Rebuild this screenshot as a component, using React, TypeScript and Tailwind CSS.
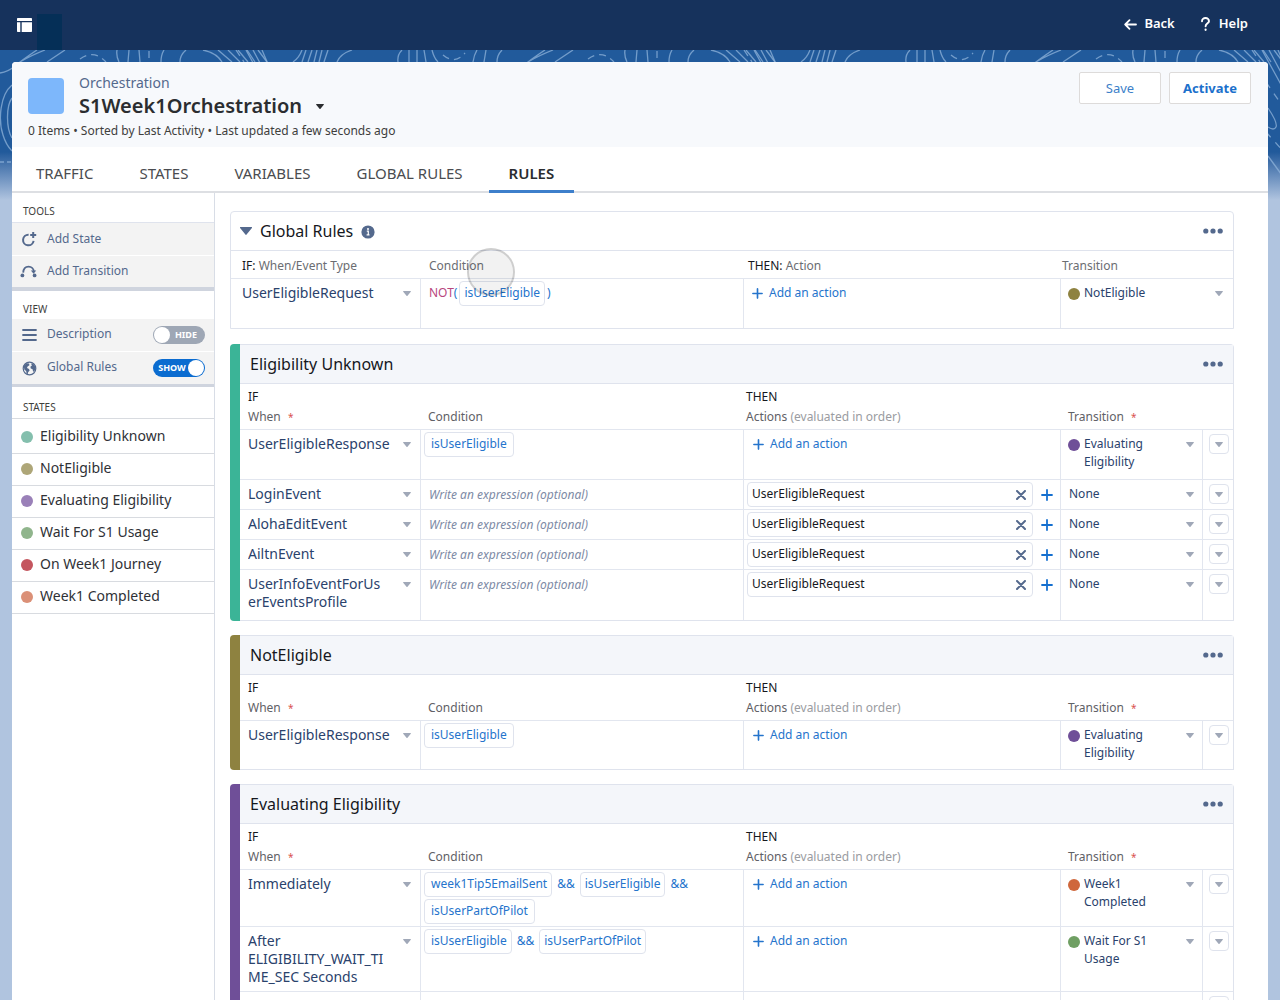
import React from 'react'

type Dot = 'olive' | 'purple' | 'orange' | 'green'

const dotColors: Record<Dot, string> = {
  olive: 'bg-[#8e8240]',
  purple: 'bg-[#6f4f98]',
  orange: 'bg-[#cf673c]',
  green: 'bg-[#6f9f63]',
}

interface Rule {
  when: string
  condition?: string[][]
  action?: string
  transition?: string
  dot?: Dot
  height: string
}

interface RuleGroup {
  title: string
  bar: string
  rules: Rule[]
  draft?: boolean
}

const tabs = ['TRAFFIC', 'STATES', 'VARIABLES', 'GLOBAL RULES', 'RULES']

const states = [
  { name: 'Eligibility Unknown', color: 'bg-[#84bfad]' },
  { name: 'NotEligible', color: 'bg-[#aea678]' },
  { name: 'Evaluating Eligibility', color: 'bg-[#9a80b8]' },
  { name: 'Wait For S1 Usage', color: 'bg-[#90b58c]' },
  { name: 'On Week1 Journey', color: 'bg-[#c4565f]' },
  { name: 'Week1 Completed', color: 'bg-[#db9077]' },
]

const groups: RuleGroup[] = [
  {
    title: 'Eligibility Unknown',
    bar: 'bg-[#3bb497]',
    rules: [
      { when: 'UserEligibleResponse', condition: [['isUserEligible']], transition: 'Evaluating Eligibility', dot: 'purple', height: 'h-[50px]' },
      { when: 'LoginEvent', action: 'UserEligibleRequest', height: 'h-[30px]' },
      { when: 'AlohaEditEvent', action: 'UserEligibleRequest', height: 'h-[30px]' },
      { when: 'AiltnEvent', action: 'UserEligibleRequest', height: 'h-[30px]' },
      { when: 'UserInfoEventForUserEventsProfile', action: 'UserEligibleRequest', height: 'h-[51px]' },
    ],
  },
  {
    title: 'NotEligible',
    bar: 'bg-[#8e8240]',
    rules: [
      { when: 'UserEligibleResponse', condition: [['isUserEligible']], transition: 'Evaluating Eligibility', dot: 'purple', height: 'h-[49px]' },
    ],
  },
  {
    title: 'Evaluating Eligibility',
    bar: 'bg-[#6f4f98]',
    draft: true,
    rules: [
      {
        when: 'Immediately',
        condition: [['week1Tip5EmailSent', 'isUserEligible', ''], ['isUserPartOfPilot']],
        transition: 'Week1 Completed',
        dot: 'orange',
        height: 'h-[57px]',
      },
      {
        when: 'After ELIGIBILITY_WAIT_TIME_SEC Seconds',
        condition: [['isUserEligible', 'isUserPartOfPilot']],
        transition: 'Wait For S1 Usage',
        dot: 'green',
        height: 'h-[65px]',
      },
    ],
  },
]

const Caret = ({ className = '' }: { className?: string }) => (
  <svg viewBox="0 0 8 5" className={`w-2 h-[5px] shrink-0 ${className}`} fill="currentColor" aria-hidden="true">
    <path d="M0.6 0h6.8c.5 0 .7.5.4.8L4.5 4.7c-.3.3-.7.3-1 0L.2.8C-.1.5.1 0 .6 0z" />
  </svg>
)

const Plus = ({ className = '' }: { className?: string }) => (
  <svg viewBox="0 0 12 12" className={`shrink-0 ${className}`} stroke="currentColor" strokeWidth="1.8" strokeLinecap="round" aria-hidden="true">
    <path d="M6 1v10M1 6h10" />
  </svg>
)

const MoreButton = ({ label }: { label: string }) => (
  <button className="text-[#54698d] p-0.5" aria-label={label}>
    <svg viewBox="0 0 20 6" className="w-5 h-1.5" fill="currentColor">
      <circle cx="2.8" cy="3" r="2.6" />
      <circle cx="10" cy="3" r="2.6" />
      <circle cx="17.2" cy="3" r="2.6" />
    </svg>
  </button>
)

// One line values use the native select, long ones need a button so that the text can wrap
const Picker = ({ value, label, dot, size }: { value: string; label: string; dot?: Dot; size: string }) => {
  const wraps = value.length > 20 || value.startsWith('Week1') || value.startsWith('Wait')
  return (
    <div className={`flex items-start text-[#2a426c] leading-[18px] ${size}`}>
      {dot && <span className={`w-3 h-3 mt-1 mr-1 rounded-full shrink-0 ${dotColors[dot]}`} />}
      {wraps ? (
        <button aria-haspopup="listbox" aria-label={`${label}: ${value}`} className="flex flex-1 min-w-0 items-start text-left">
          <span className={`flex-1 min-w-0 wrap-anywhere ${dot ? 'pr-7' : 'pr-4'}`}>{value}</span>
          <Caret className="mt-[7px] text-[#a0a8b8]" />
        </button>
      ) : (
        <div className="flex flex-1 min-w-0 items-start">
          <select aria-label={label} defaultValue={value} className="flex-1 min-w-0 h-[18px] appearance-none bg-transparent">
            <option>{value}</option>
          </select>
          <Caret className="mt-[7px] text-[#a0a8b8] pointer-events-none" />
        </div>
      )}
    </div>
  )
}

const Chip = ({ children, padding = 'px-1' }: { children: React.ReactNode; padding?: string }) => (
  <button className={`h-[25px] border border-[#dfe3ed] rounded bg-white leading-[18px] pb-0.5 ${padding}`}>
    {children}
  </button>
)

const Condition = ({ lines }: { lines: string[][] }) => (
  <div className="flex flex-col gap-0.5 pt-0.5 pl-[3px] text-xs text-[#2574cc]">
    {lines.map((line, i) => (
      <div key={i} className="flex items-center gap-[5px]">
        {line.map((name, j) => (
          <React.Fragment key={j}>
            {j > 0 && <span className="pb-0.5">&amp;&amp;</span>}
            {name && <Chip padding={j > 0 ? 'px-1' : line.length > 1 ? 'pl-1.5 pr-1' : 'px-1.5'}>{name}</Chip>}
          </React.Fragment>
        ))}
      </div>
    ))}
  </div>
)

const AddAction = () => (
  <button className="flex items-center gap-1.5 text-xs leading-[18px] text-[#2574cc]">
    <Plus className="w-[11px] h-[11px]" />
    Add an action
  </button>
)

const RuleMenu = () => (
  <button aria-label="Rule menu" className="flex items-center justify-center w-5 h-5 border border-[#dfe3ed] rounded text-[#a0a8b8]">
    <Caret />
  </button>
)

const cell = 'border-t border-[#e2e6ef] align-top p-0'
const split = 'border-l'

const RuleRow = ({ rule }: { rule: Rule }) => (
  <tr className={rule.height}>
    <td className={`${cell} pt-[5px] pb-[5px] pl-2 pr-[9px]`}>
      <Picker value={rule.when} label="When" size="text-sm leading-[18px]" />
    </td>
    <td className={`${cell} ${split}`}>
      {rule.condition ? (
        <Condition lines={rule.condition} />
      ) : (
        <input
          aria-label="Condition"
          placeholder="Write an expression (optional)"
          className="block w-full h-[18px] mt-[5px] pl-2 text-xs italic outline-none placeholder:text-[#7d8aa5]"
        />
      )}
    </td>
    <td className={`${cell} ${split}`}>
      {rule.action ? (
        <div className="flex items-center pt-0.5 pl-[3px] pr-[7px]">
          <div className="flex flex-1 min-w-0 items-center h-[25px] border border-[#dfe3ed] rounded pl-1 pr-1.5">
            <input aria-label="Action" defaultValue={rule.action} className="flex-1 min-w-0 text-xs text-[#16181d] outline-none pb-0.5" />
            <button aria-label="Remove action" className="text-[#54698d]">
              <svg viewBox="0 0 10 10" className="w-2.5 h-2.5" stroke="currentColor" strokeWidth="2" strokeLinecap="round">
                <path d="M1 1l8 8M9 1l-8 8" />
              </svg>
            </button>
          </div>
          <button aria-label="Add action" className="ml-2 text-[#1570d0]">
            <Plus className="w-3 h-3" />
          </button>
        </div>
      ) : (
        <div className="pt-[5px] pl-[9px]">
          <AddAction />
        </div>
      )}
    </td>
    <td className={`${cell} ${split} pt-[5px] pr-2 ${rule.dot ? 'pl-[7px]' : 'pl-2'}`}>
      <Picker value={rule.transition ?? 'None'} label="Transition" dot={rule.dot} size="text-xs leading-[18px]" />
    </td>
    <td className={`${cell} ${split} pt-1 pl-1.5`}>
      <RuleMenu />
    </td>
  </tr>
)

const DraftRow = () => (
  <tr className="h-[50px]">
    <td className={cell} />
    <td className={`${cell} ${split}`} />
    <td className={`${cell} ${split}`} />
    <td className={`${cell} ${split}`} />
    <td className={`${cell} ${split} pt-1 pl-1.5`}>
      <RuleMenu />
    </td>
  </tr>
)

const Required = () => <span className="ml-1 text-[10px] text-[#d9534f]">*</span>

const GroupCard = ({ group }: { group: RuleGroup }) => (
  <section className="flex">
    <div className={`w-2.5 shrink-0 rounded-l ${group.bar}`} />
    <div className="flex-1 min-w-0 border border-l-0 border-[#dfe3ed] rounded-tr">
      <div className="flex items-center justify-between h-[38px] pl-2.5 pr-2 bg-[#f4f6fa]">
        <h2 className="text-base text-[#16181d]">{group.title}</h2>
        <MoreButton label={`${group.title} menu`} />
      </div>
      <table className="w-full table-fixed border-separate border-spacing-0 border-t border-[#dfe3ed]">
        <colgroup>
          <col className="w-[180px]" />
          <col className="w-[323px]" />
          <col />
          <col className="w-[142px]" />
          <col className="w-[31px]" />
        </colgroup>
        <thead>
          <tr className="text-left text-xs leading-5 text-[#5f6166] align-bottom">
            <th className="font-normal pt-[3px] pb-0.5 pl-2 pr-0">
              <div className="text-[#16181d]">IF</div>
              When <Required />
            </th>
            <th className="font-normal pt-[3px] pb-0.5 pl-2 pr-0">Condition</th>
            <th className="font-normal pt-[3px] pb-0.5 pl-[3px] pr-0">
              <div className="text-[#16181d]">THEN</div>
              Actions <span className="text-[#9a9ca1]">(evaluated in order)</span>
            </th>
            <th colSpan={2} className="font-normal pt-[3px] pb-0.5 pl-2 pr-0">
              Transition <Required />
            </th>
          </tr>
        </thead>
        <tbody>
          {group.rules.map((rule) => (
            <RuleRow key={rule.when} rule={rule} />
          ))}
          {group.draft && <DraftRow />}
        </tbody>
      </table>
    </div>
  </section>
)

const GlobalRules = () => (
  <section className="relative mb-px border border-[#dfe3ed] rounded-t">
    <div className="flex items-center h-[38px] pl-[9px] pr-2">
      <button aria-label="Collapse global rules" className="text-[#54698d]">
        <svg viewBox="0 0 12 8" className="w-3 h-2" fill="currentColor">
          <path d="M0.6 0h10.8c.6 0 .8.5.5.9L6.6 7.6c-.3.4-.9.4-1.2 0L.1.9C-.2.5 0 0 .6 0z" />
        </svg>
      </button>
      <h2 className="ml-2 text-base text-[#16181d]">Global Rules</h2>
      <svg viewBox="0 0 14 14" className="w-3.5 h-3.5 ml-2 mt-0.5" aria-hidden="true">
        <circle cx="7" cy="7" r="6.6" fill="#54698d" />
        <circle cx="7" cy="4" r="1" fill="#fff" />
        <path d="M5.8 6.2h1.5v3.4M5.6 9.9h2.9" stroke="#fff" strokeWidth="1.2" fill="none" />
      </svg>
      <div className="flex-1" />
      <MoreButton label="Global rules menu" />
    </div>
    <table className="w-full table-fixed border-separate border-spacing-0 border-t border-[#dfe3ed]">
      <colgroup>
        <col className="w-[189px]" />
        <col className="w-[323px]" />
        <col />
        <col className="w-[173px]" />
      </colgroup>
      <thead>
        <tr className="h-[27px] text-left text-xs leading-[18px] text-[#6b6d72]">
          <th className="font-normal p-0 pt-0.5 pl-[11px]"><span className="text-[#16181d]">IF:</span> When/Event Type</th>
          <th className="font-normal p-0 pt-0.5 pl-[9px]">Condition</th>
          <th className="font-normal p-0 pt-0.5 pl-[5px]"><span className="text-[#16181d]">THEN:</span> Action</th>
          <th className="font-normal p-0 pt-0.5 pl-0.5">Transition</th>
        </tr>
      </thead>
      <tbody>
        <tr className="h-[50px]">
          <td className={`${cell} pt-[5px] pl-[11px] pr-[9px]`}>
            <Picker value="UserEligibleRequest" label="When" size="text-sm leading-[18px]" />
          </td>
          <td className={`${cell} ${split} pt-0.5 pl-2`}>
            <div className="flex items-center text-xs text-[#2574cc]">
              <span className="pb-0.5 text-[#b8467e]">NOT</span>
              <span className="pb-0.5 mr-0.5">(</span>
              <Chip>isUserEligible</Chip>
              <span className="pb-0.5 ml-0.5">)</span>
            </div>
          </td>
          <td className={`${cell} ${split} pt-[5px] pl-2`}>
            <AddAction />
          </td>
          <td className={`${cell} ${split} pt-[5px] pl-[7px] pr-2.5`}>
            <Picker value="NotEligible" label="Transition" dot="olive" size="text-xs leading-[18px]" />
          </td>
        </tr>
      </tbody>
    </table>
    {/* Pointer halo */}
    <div className="absolute left-[236px] top-9 w-12 h-12 rounded-full border-2 border-black/15 bg-black/5 pointer-events-none" />
  </section>
)

const Toggle = ({ id, on }: { id: string; on: boolean }) => (
  <span className={`relative flex items-center w-[52px] h-[18px] rounded-full text-[9px] font-bold text-white ${on ? 'bg-[#0b6cd0]' : 'bg-[#9ea7b5]'}`}>
    <input id={id} type="checkbox" role="switch" defaultChecked={on} className="absolute inset-0 w-full h-full appearance-none rounded-full cursor-pointer" />
    <span className={`flex-1 text-center pointer-events-none ${on ? 'pr-3.5' : 'pl-3.5'}`}>{on ? 'SHOW' : 'HIDE'}</span>
    <span className={`absolute top-px w-4 h-4 rounded-full bg-white pointer-events-none ${on ? 'right-px' : 'left-px'}`} />
  </span>
)

const SideHeading = ({ children }: { children: React.ReactNode }) => (
  <h3 className="pl-[11px] text-[10px] leading-[14px] text-[#3e3e3c]">{children}</h3>
)

const Sidebar = () => (
  <aside className="w-[203px] shrink-0 border-r border-[#d8dde6]">
    <div className="pt-[11px] pb-1">
      <SideHeading>TOOLS</SideHeading>
    </div>
    <div className="border-t border-[#dfe3ed] border-b-4 border-b-[#cfd4de] bg-[#f3f3f3] text-xs text-[#54698d]">
      <button className="flex items-center w-full h-[33px] pl-2 border-b border-white">
        <svg viewBox="0 0 18 16" className="w-[18px] h-4 mr-[9px]" stroke="currentColor" fill="none" strokeWidth="2" aria-hidden="true">
          <path d="M8.600 3.700A5.300 5.300 0 1 0 13.600 9.800" />
          <path d="M13.200 1v6M10.200 4h6" />
        </svg>
        Add State
      </button>
      <button className="flex items-center w-full h-[31px] pl-2 pb-0.5">
        <svg viewBox="0 0 18 14" className="w-[18px] h-3.5 mr-[9px]" aria-hidden="true">
          <path d="M3.2 8.6C3.4 5 5.500 2.600 8.600 2.600s5 2.400 5.200 4.600" stroke="currentColor" strokeWidth="1.800" fill="none" />
          <path d="M10.800 6.600h5.400l-2.600 3.200z" fill="currentColor" />
          <circle cx="2.400" cy="11.400" r="1.900" fill="currentColor" />
          <circle cx="14.600" cy="11.400" r="1.900" fill="currentColor" />
        </svg>
        Add Transition
      </button>
    </div>
    <div className="pt-[11px] pb-[3px]">
      <SideHeading>VIEW</SideHeading>
    </div>
    <div className="border-b-[3px] border-[#cfd4de] bg-[#f3f3f3] text-xs text-[#54698d]">
      <div className="flex items-center h-[33px] pl-2.5 pr-[9px] border-b border-white">
        <svg viewBox="0 0 15 12" className="w-[15px] h-3 mr-2.5" stroke="currentColor" strokeWidth="1.8" strokeLinecap="round" aria-hidden="true">
          <path d="M1 1h13M1 6h13M1 11h13" />
        </svg>
        <label htmlFor="show-description" className="flex-1 pb-0.5">Description</label>
        <Toggle id="show-description" on={false} />
      </div>
      <div className="flex items-center h-8 pl-2.5 pr-[9px]">
        <svg viewBox="0 0 15 15" className="w-[15px] h-[15px] mr-2.5" aria-hidden="true">
          <circle cx="7.500" cy="7.500" r="6.300" stroke="currentColor" strokeWidth="1.200" fill="none" />
          <path d="M1.800 4.800L4.500 2.200l2.600.4.300 1.700-1.800 1.200-.6 1.600 2 .8.600 1.500-1.500 1.800-.3 2-1.200-.6-.5-2.600-1.800-1.600zM9 2.600l2.400.3 1.800 2.600.4 2.200-1.200 2.600-1.300.4-.5-2.400-1.800-.8-.4-1.800 1.500-1.200z" fill="currentColor" />
        </svg>
        <label htmlFor="show-global" className="flex-1 pb-0.5">Global Rules</label>
        <Toggle id="show-global" on />
      </div>
    </div>
    <div className="pt-[13px] pb-1">
      <SideHeading>STATES</SideHeading>
    </div>
    <ul className="border-t border-[#d8dbe0]">
      {states.map((state) => (
        <li key={state.name} className="border-b border-[#d8dbe0] first:pt-[3px]">
          <a href="#" className="flex items-center h-[31px] pl-[9px] pb-1 text-sm text-[#2f3136]">
            <span className={`w-3 h-3 mt-0.5 mr-[7px] rounded-full ${state.color}`} />
            {state.name}
          </a>
        </li>
      ))}
    </ul>
  </aside>
)

// Contour line texture behind the page header
const Backdrop = () => (
  <svg className="absolute top-0 left-0 w-full h-[150px]" fill="none" aria-hidden="true">
    <defs>
      <pattern id="contours" width="508" height="150" patternUnits="userSpaceOnUse">
        <g stroke="#8fb3d9" strokeOpacity="0.75" strokeWidth="1.300">
          <path d="M0 23Q8 22 15 16T37 0M20 12Q30 6 45 0M47 12L65 0M117 0q-1 6 2 12M129 0l-1 12M139 0l1 12M164 0q-3 5-3 12M186 0q-6 5-6 12" />
          <path d="M203 0q14 3 19 12M218 0l14 12M228 0l12 12M238 0l10 12M247 0l8 12M258 0l9 12" />
          <path d="M302 0q-3 8-9 12M306 0l-4 12M312 0l-4 12M317 0l-3 12M322 0l-3 12M328 0l-4 12M352 0q-12 4-15 12M402 0q-5 5-4 12M409 0v12M417 0v12" />
          <path d="M424 0l2 12M432 0q2 8 6 12M477 0q-3 5-4 12M486 0l-2 12M502 0q-5 5-5 12" />
          <path strokeDasharray="7 5" d="M80 9q14-10 26 3M149 1v12M443 5q12 10 22-2M236 0l8 12" />
          <path d="M12 35C0 45-2 70 3 85q3 10 9 16M12 48c-6 8-6 30 0 40" />
          <path strokeDasharray="4 3" d="M0 112h12" />
          <path d="M253 0l15 28M246 0l22 40M262 0l6 14M252 58q10 15 8 19t-8 0M252 106l16 22" />
          <path strokeDasharray="7 7" d="M250 32l18 26M250 82l18 20" />
        </g>
      </pattern>
    </defs>
    <rect width="100%" height="150" fill="url(#contours)" />
  </svg>
)

const App: React.FC = () => {
  return (
    <div className="flex flex-col h-screen overflow-hidden font-['Noto_Sans',sans-serif] bg-[#b0c4df]">
      {/* Top bar */}
      <header className="flex items-center h-[50px] shrink-0 pl-[17px] pr-8 bg-[#16325c] text-white">
        <svg viewBox="0 0 15 14" className="w-[15px] h-3.5" fill="currentColor" aria-hidden="true">
          <path d="M1 0h13c.6 0 1 .4 1 1v2H0V1c0-.6.400-1 1-1zM0 4.200h3.300V14H1c-.6 0-1-.4-1-1zM4.700 4.200H15V13c0 .6-.4 1-1 1H4.700z" />
        </svg>
        <span className="self-end w-[25px] h-9 ml-[5px] bg-[#052f57]" />
        <nav className="flex flex-1 justify-end gap-[26px] pb-0.5 text-[13px] font-semibold">
          <a href="#" className="flex items-center gap-[7px]">
            <svg viewBox="0 0 13 11" className="w-[13px] h-[11px]" stroke="currentColor" strokeWidth="1.800" fill="none" strokeLinecap="round" strokeLinejoin="round" aria-hidden="true">
              <path d="M12 5.500H1.200M5.500 1.200L1.200 5.500l4.300 4.300" />
            </svg>
            Back
          </a>
          <a href="#" className="flex items-center gap-[9px]">
            <svg viewBox="0 0 9 14" className="w-[9px] h-3.5" stroke="currentColor" strokeWidth="1.900" fill="none" strokeLinecap="round" aria-hidden="true">
              <path d="M1 4.200C1 2.200 2.500 1 4.500 1S8 2.200 8 4.200 4.600 6.500 4.600 9.200" />
              <path d="M4.600 12.700v.1" strokeWidth="2.200" />
            </svg>
            Help
          </a>
        </nav>
      </header>

      <div className="relative flex flex-col flex-1 min-h-0 px-3 pt-3 bg-linear-to-b from-[#215a9b] from-[102px] to-[#b0c4df] to-[150px]">
        <Backdrop />
        <div className="relative flex flex-col flex-1 min-h-0 bg-white rounded-t">
          {/* Page header */}
          <div className="flex items-start justify-between h-[85px] shrink-0 pt-2.5 pl-4 pr-[17px] bg-[#f7f9fc] rounded-t">
            <div>
              <div className="flex">
                <span className="w-9 h-9 mt-1.5 mr-[15px] rounded bg-[#7db7fb]" />
                <div>
                  <p className="text-sm leading-[22px] text-[#54698d]">Orchestration</p>
                  <h1 className="flex items-center text-xl leading-6 font-semibold text-[#2b2d30]">
                    S1Week1Orchestration
                    <button aria-label="Switch orchestration" className="ml-3.5">
                      <Caret />
                    </button>
                  </h1>
                </div>
              </div>
              <p className="mt-[3px] text-xs leading-5 text-[#3e3e3c]">0 Items • Sorted by Last Activity • Last updated a few seconds ago</p>
            </div>
            <div className="flex gap-2 text-[13px]">
              <button className="w-[82px] h-8 pt-0.5 border border-[#dddbda] rounded-xs bg-white text-[#3c7fc9]">Save</button>
              <button className="w-[82px] h-8 pt-0.5 border border-[#dddbda] rounded-xs bg-white text-[#1b70cc] font-bold">Activate</button>
            </div>
          </div>

          {/* Tabs */}
          <div role="tablist" className="flex gap-1.5 h-[46px] shrink-0 pl-[5px] border-b-2 border-[#dddfe3] text-[15px] text-[#4a4c50]">
            {tabs.map((tab) => (
              <button
                key={tab}
                role="tab"
                aria-selected={tab === 'RULES'}
                className={`px-5 first:pl-[19px] pt-2.5 -mb-0.5 ${
                  tab === 'RULES' ? 'font-semibold text-[#2b2d30] border-b-3 border-[#3d7fcb]' : 'border-b-3 border-transparent'
                }`}
              >
                {tab}
              </button>
            ))}
          </div>

          <div className="flex flex-1 min-h-0">
            <Sidebar />
            <main className="flex flex-col flex-1 min-w-0 gap-3.5 pt-[18px] pl-[15px] pr-[34px] overflow-hidden">
              <GlobalRules />
              {groups.map((group) => (
                <GroupCard key={group.title} group={group} />
              ))}
            </main>
          </div>
        </div>
      </div>
    </div>
  )
}

export default App
